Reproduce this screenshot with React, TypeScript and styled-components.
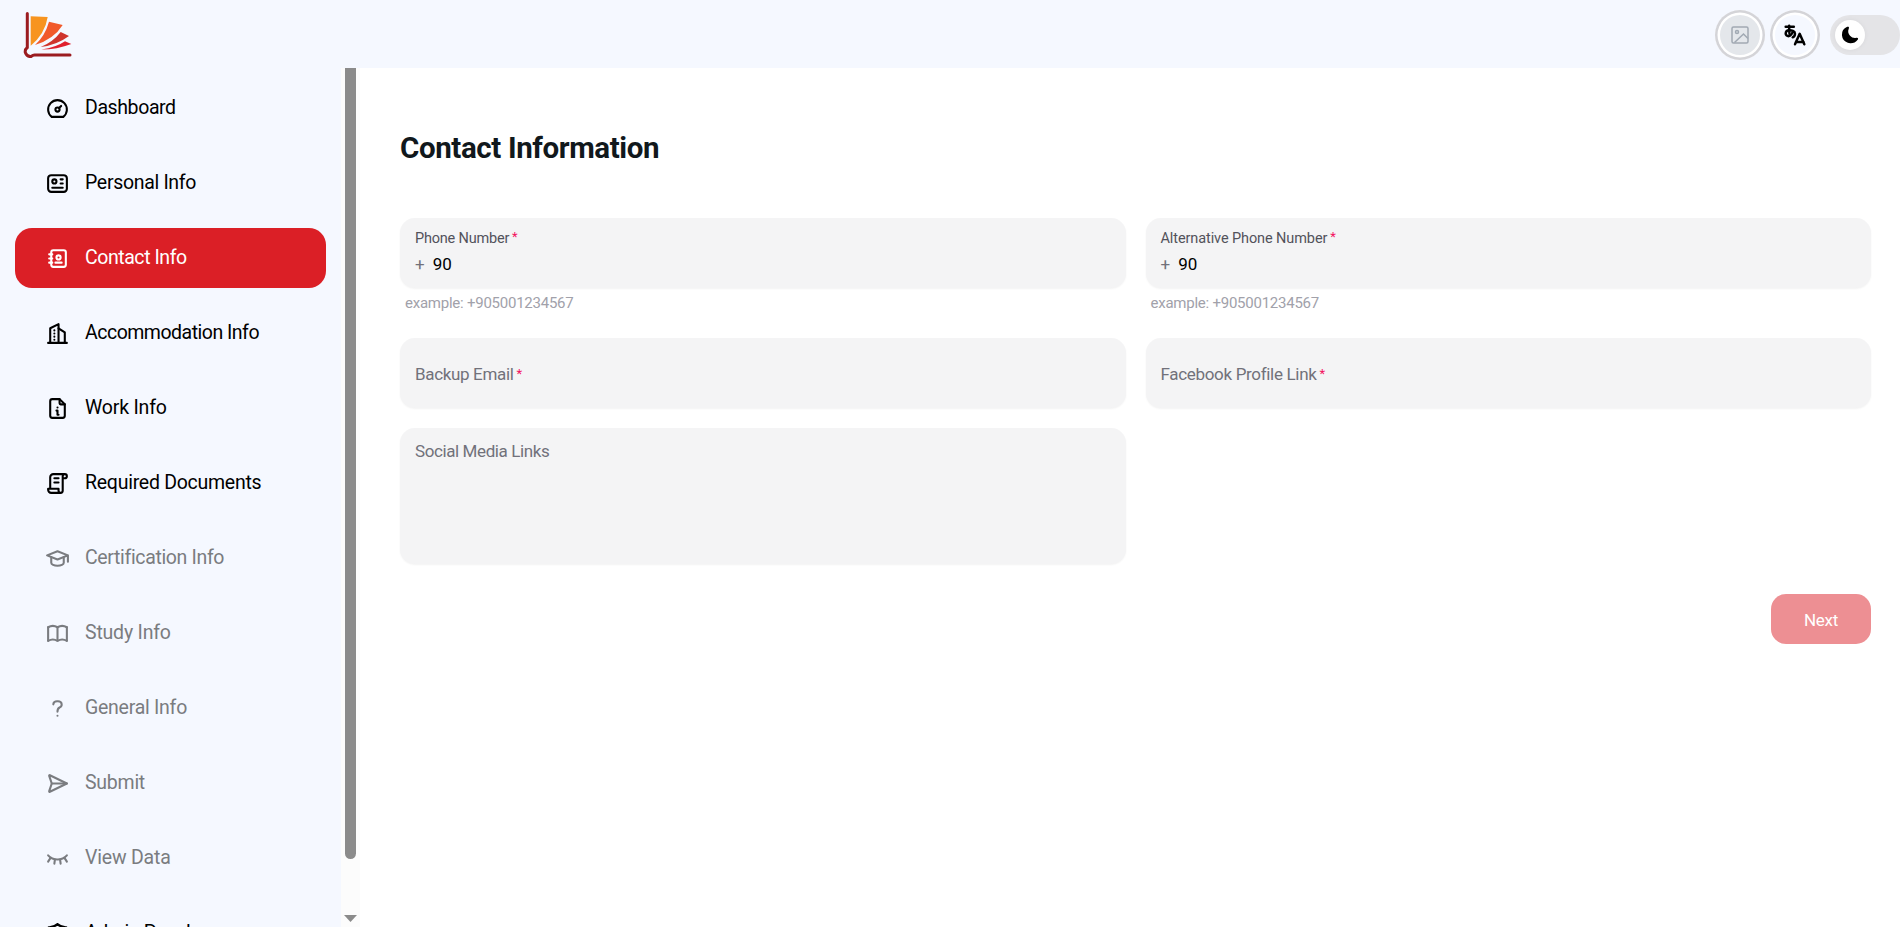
import React from 'react';
import styled, { createGlobalStyle } from 'styled-components';
import type { IconType } from 'react-icons';
import {
  TbDashboard, TbId, TbAddressBook, TbBuildingSkyscraper, TbFileInfo, TbLicense, TbSchool,
  TbBook, TbQuestionMark, TbSend2, TbEyeClosed, TbShieldLock, TbLanguageHiragana,
} from 'react-icons/tb';

const GlobalStyle = createGlobalStyle`
  * { box-sizing: border-box; }
  body {
    margin: 0;
    overflow: hidden;
    background: #fff;
    font-family: Roboto, "Liberation Sans", sans-serif;
  }
`;

const Page = styled.div`
  display: flex;
  flex-direction: column;
  height: 100vh;
  overflow: hidden;
`;

const Header = styled.header`
  display: flex;
  flex: none;
  align-items: center;
  justify-content: space-between;
  height: 68px;
  padding-left: 23px;
  background: #f5f8ff;
`;

const Logo = styled.svg`
  display: block;
  width: 50px;
  height: 50px;
  margin-bottom: 2px;
`;

const HeaderActions = styled.div`
  display: flex;
  align-items: center;
  gap: 5px;
  padding-top: 2px;
`;

const RoundButton = styled.button<{ $filled?: boolean }>`
  display: flex;
  align-items: center;
  justify-content: center;
  width: 50px;
  height: 50px;
  padding: 0 0 1px;
  border: 0;
  border-radius: 50%;
  color: ${(p) => (p.$filled ? '#a1a9b3' : '#000')};
  background: ${(p) => (p.$filled ? '#e4e7eb' : '#f5f8ff')};
  box-shadow: inset 0 0 0 2.5px #d4d4d8, inset 0 0 0 5px #fff;
`;

const Toggle = styled.div`
  display: flex;
  align-items: center;
  width: 70px;
  height: 40px;
  margin-left: 5px;
  padding: 0 5px;
  border-radius: 20px;
  background: #e4e4e7;
`;

const Knob = styled.div`
  display: flex;
  align-items: center;
  justify-content: center;
  width: 30px;
  height: 30px;
  border-radius: 50%;
  background: #fff;
  box-shadow: 0 0 5px rgba(0, 0, 0, 0.06);
`;

const Body = styled.div`
  display: flex;
  flex: 1;
  min-height: 0;
`;

const Sidebar = styled.nav`
  display: flex;
  flex: none;
  flex-direction: column;
  gap: 15px;
  width: 341px;
  padding: 10px 15px 0;
  overflow: hidden;
  background: #f5f8ff;
`;

const NavItem = styled.a<{ $state?: 'active' | 'disabled' }>`
  display: flex;
  flex: none;
  align-items: center;
  gap: 15px;
  height: 60px;
  padding-left: 30px;
  border-radius: 17px;
  color: ${(p) => (p.$state === 'active' ? '#fff' : p.$state === 'disabled' ? '#7a7c80' : '#000')};
  background: ${(p) => (p.$state === 'active' ? '#db1f26' : 'transparent')};
  font-size: 19.5px;
  line-height: 30px;
  white-space: nowrap;
`;

const NavLabel = styled.span<{ $track: number }>`
  letter-spacing: ${(p) => p.$track}px;
`;

const Scrollbar = styled.div`
  display: flex;
  flex: none;
  flex-direction: column;
  align-items: center;
  justify-content: space-between;
  width: 19px;
  padding-bottom: 5px;
  background: #fcfcfc;
`;

const Thumb = styled.div`
  width: 11px;
  height: 791px;
  border-radius: 0 0 6px 6px;
  background: #8b8b8b;
`;

const Main = styled.main`
  flex: 1;
  padding: 60px 29px 0 40px;
`;

const Title = styled.h1`
  margin: 0;
  color: #11181c;
  font-size: 29.5px;
  font-weight: 700;
  line-height: 40px;
  letter-spacing: -0.38px;
`;

const FormGrid = styled.form`
  display: grid;
  grid-template-columns: 1fr 1fr;
  column-gap: 20px;
  row-gap: 20px;
  margin-top: 50px;
`;

const Field = styled.div`
  height: 100px;
`;

const InputBox = styled.div<{ $height?: number; $top?: boolean }>`
  display: flex;
  flex-direction: column;
  justify-content: ${(p) => (p.$top ? 'flex-start' : 'center')};
  height: ${(p) => p.$height ?? 70}px;
  padding: ${(p) => (p.$top ? '10px' : '1px')} 15px 0;
  border-radius: 15px;
  background: #f4f4f5;
  box-shadow: 0 1px 2px rgba(0, 0, 0, 0.05);
`;

const Label = styled.label<{ $small?: boolean; $track?: number }>`
  color: ${(p) => (p.$small ? '#52525b' : '#71717a')};
  font-size: ${(p) => (p.$small ? 14.5 : 17)}px;
  line-height: ${(p) => (p.$small ? 22 : 26)}px;
  letter-spacing: ${(p) => p.$track ?? 0}px;
`;

const Star = styled.span`
  margin-left: 3px;
  color: #f31260;
  font-size: 13px;
  line-height: 0;
  vertical-align: 2px;
`;

const Value = styled.div`
  display: flex;
  gap: 8px;
  margin-top: 1px;
  padding-bottom: 2px;
  color: #000;
  font-size: 17px;
  line-height: 26px;
`;

const Plus = styled.span`
  color: #71717a;
`;

const Hint = styled.div`
  padding: 4px 5px 0;
  color: #a1a1aa;
  font-size: 15px;
  line-height: 22px;
  letter-spacing: -0.24px;
`;

const Actions = styled.div`
  display: flex;
  justify-content: flex-end;
  margin-top: 30px;
`;

const NextButton = styled.button`
  width: 100px;
  height: 50px;
  padding: 2px 0 0;
  border: 0;
  border-radius: 15px;
  color: #fff;
  background: #ed8f93;
  font: 400 17px Roboto, "Liberation Sans", sans-serif;
  letter-spacing: -0.3px;
`;

type Item = { icon: IconType; label: string; track: number; state?: 'active' | 'disabled' };

const items: Item[] = [
  { icon: TbDashboard, label: 'Dashboard', track: -0.4 },
  { icon: TbId, label: 'Personal Info', track: -0.32 },
  { icon: TbAddressBook, label: 'Contact Info', track: -0.44, state: 'active' },
  { icon: TbBuildingSkyscraper, label: 'Accommodation Info', track: -0.5 },
  { icon: TbFileInfo, label: 'Work Info', track: -0.2 },
  { icon: TbLicense, label: 'Required Documents', track: -0.26 },
  { icon: TbSchool, label: 'Certification Info', track: -0.35, state: 'disabled' },
  { icon: TbBook, label: 'Study Info', track: -0.2, state: 'disabled' },
  { icon: TbQuestionMark, label: 'General Info', track: -0.26, state: 'disabled' },
  { icon: TbSend2, label: 'Submit', track: -0.25, state: 'disabled' },
  { icon: TbEyeClosed, label: 'View Data', track: -0.2, state: 'disabled' },
  { icon: TbShieldLock, label: 'Admin Panel', track: -0.4 },
];

function PhoneField({ label, track }: { label: string; track: number }) {
  return (
    <Field>
      <InputBox>
        <Label $small $track={track}>{label}<Star>*</Star></Label>
        <Value><Plus>+</Plus><span>90</span></Value>
      </InputBox>
      <Hint>example: +905001234567</Hint>
    </Field>
  );
}

export default function App() {
  return (
    <Page>
      <GlobalStyle />
      <Header>
        <Logo viewBox="0 0 50 50">
          <path d="M7.700 8.300L24.700 9Q22 26 7.700 37.700Z" fill="#f7941f" />
          <path d="M26 13.700L39.700 17Q31 31 12 37Q22 28 26 13.700Z" fill="#f15a2b" />
          <path d="M37.700 24L46 28Q34 37 17.700 39Q30 34 37.700 24Z" fill="#cf342c" />
          <path d="M42 33.300L48.300 36Q34 41.500 18.300 41.500Q33 39.500 42 33.300Z" fill="#e01f2d" />
          <path d="M4.300 5.500V39.500Q1.800 41.500 2.300 44.500Q4 49 8 48.500Q10 47 11.500 47H47" fill="none" stroke="#9b1c20" strokeWidth="3" strokeLinecap="round" />
        </Logo>
        <HeaderActions>
          <RoundButton $filled>
            <svg width="18" height="18" viewBox="0 0 18 18" fill="none" stroke="currentColor" strokeWidth="1.500">
              <rect x="1" y="1" width="16" height="16" rx="1.500" />
              <circle cx="6" cy="6" r="1.500" />
              <path d="M3.500 16.500L12.500 8L17 12.500" />
            </svg>
          </RoundButton>
          <RoundButton><TbLanguageHiragana size={28} strokeWidth={2.1} /></RoundButton>
          <Toggle>
            <Knob>
              <svg width="20" height="20" viewBox="0 0 24 24">
                <path d="M21.530 15.930c-.16-.27-.61-.69-1.730-.49a8.460 8.460 0 01-1.880.13 8.409 8.409 0 01-5.910-2.820 8.068 8.068 0 01-1.440-8.660c.44-1.010.13-1.540-.09-1.760s-.77-.55-1.830-.11a10.318 10.318 0 00-6.320 10.210 10.475 10.475 0 007.040 8.990 10 10 0 002.890.55c.16.01.32.02.48.02a10.500 10.500 0 008.470-4.270c.67-.93.49-1.519.32-1.790z" />
              </svg>
            </Knob>
          </Toggle>
        </HeaderActions>
      </Header>
      <Body>
        <Sidebar>
          {items.map(({ icon: Icon, label, track, state }) => (
            <NavItem key={label} $state={state}>
              <Icon size={25} />
              <NavLabel $track={track}>{label}</NavLabel>
            </NavItem>
          ))}
        </Sidebar>
        <Scrollbar>
          <Thumb />
          <svg width="13" height="7" viewBox="0 0 13 7"><path d="M0 0H13L6.500 7Z" fill="#8b8b8b" /></svg>
        </Scrollbar>
        <Main>
          <Title>Contact Information</Title>
          <FormGrid>
            <PhoneField label="Phone Number" track={-0.2} />
            <PhoneField label="Alternative Phone Number" track={-0.1} />
            <InputBox><Label $track={-0.34}>Backup Email<Star>*</Star></Label></InputBox>
            <InputBox><Label $track={-0.32}>Facebook Profile Link<Star>*</Star></Label></InputBox>
            <InputBox $height={136} $top><Label $track={-0.4}>Social Media Links</Label></InputBox>
          </FormGrid>
          <Actions><NextButton>Next</NextButton></Actions>
        </Main>
      </Body>
    </Page>
  );
}
